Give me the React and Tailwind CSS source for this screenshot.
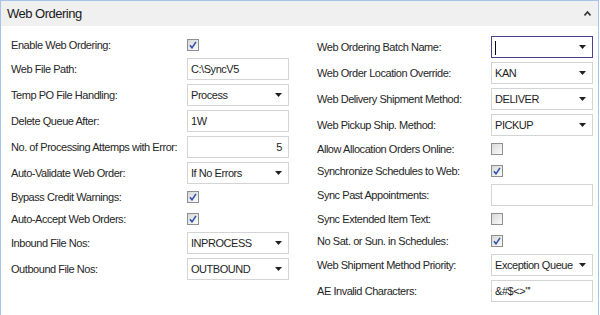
import React from 'react';

const font = { fontFamily: '"Liberation Sans", Arial, sans-serif' };

function Check({ checked }) {
	return (
		<div className="w-[12px] h-[12px] border border-[#8e8f8f] bg-gradient-to-br from-[#d8d8d8] to-[#fbfbfb] flex items-center justify-center">
			{checked && (
				<svg width="8" height="8" viewBox="0 0 8 8">
					<path d="M1 4.2 L3 6.8 L7 0.8" fill="none" stroke="#2a4fa8" strokeWidth="1.5" />
				</svg>
			)}
		</div>
	);
}

function Field({ value, dropdown, right, focused }) {
	return (
		<div
			className={`w-[102px] h-[22px] bg-white border flex items-center pl-[3px] pr-[6px] ${focused ? 'border-[#4d3f8f]' : 'border-[#d4d4d4]'}`}
		>
			<span className={`flex-1 text-[11px] tracking-[-0.45px] text-[#1e1e1e] whitespace-nowrap ${right ? 'text-right' : ''}`}>
				{focused ? <span className="inline-block w-px h-[14px] bg-black align-middle" /> : value}
			</span>
			{dropdown && (
				<svg width="7" height="4" viewBox="0 0 7 4" className="ml-1">
					<path d="M0 0 H7 L3.5 4 Z" fill="#222" />
				</svg>
			)}
		</div>
	);
}

function Row({ label, kind, value, right, focused, inputW }) {
	const isCheck = kind === 'check' || kind === 'empty';
	return (
		<div className={`flex items-center ${isCheck ? 'h-[22px]' : 'h-[26px]'}`}>
			<div className={`${inputW} text-[11px] tracking-[-0.45px] text-[#262626] whitespace-nowrap`}>{label}</div>
			{kind === 'check' && <Check checked />}
			{kind === 'empty' && <Check checked={false} />}
			{kind === 'text' && <Field value={value} right={right} focused={focused} />}
			{kind === 'drop' && <Field value={value} dropdown focused={focused} />}
		</div>
	);
}

const left = [
	{ label: 'Enable Web Ordering:', kind: 'check' },
	{ label: 'Web File Path:', kind: 'text', value: 'C:\\SyncV5' },
	{ label: 'Temp PO File Handling:', kind: 'drop', value: 'Process' },
	{ label: 'Delete Queue After:', kind: 'text', value: '1W' },
	{ label: 'No. of Processing Attemps with Error:', kind: 'text', value: '5', right: true },
	{ label: 'Auto-Validate Web Order:', kind: 'drop', value: 'If No Errors' },
	{ label: 'Bypass Credit Warnings:', kind: 'check' },
	{ label: 'Auto-Accept Web Orders:', kind: 'check' },
	{ label: 'Inbound File Nos:', kind: 'drop', value: 'INPROCESS' },
	{ label: 'Outbound File Nos:', kind: 'drop', value: 'OUTBOUND' },
];

const rightCol = [
	{ label: 'Web Ordering Batch Name:', kind: 'drop', focused: true },
	{ label: 'Web Order Location Override:', kind: 'drop', value: 'KAN' },
	{ label: 'Web Delivery Shipment Method:', kind: 'drop', value: 'DELIVER' },
	{ label: 'Web Pickup Ship. Method:', kind: 'drop', value: 'PICKUP' },
	{ label: 'Allow Allocation Orders Online:', kind: 'empty' },
	{ label: 'Synchronize Schedules to Web:', kind: 'check' },
	{ label: 'Sync Past Appointments:', kind: 'text', value: '' },
	{ label: 'Sync Extended Item Text:', kind: 'empty' },
	{ label: 'No Sat. or Sun. in Schedules:', kind: 'check' },
	{ label: 'Web Shipment Method Priority:', kind: 'drop', value: 'Exception Queue' },
	{ label: 'AE Invalid Characters:', kind: 'text', value: '&#$<>"\'' },
];

export default function App() {
	return (
		<div className="w-[600px] h-[315px] bg-white overflow-hidden" style={font}>
			<div className="w-[599px] h-[330px] border border-[#a6c4ea]">
				<div className="h-[25px] bg-[#f0f0f0] flex items-center justify-between pl-[6px] pr-[7px]">
					<span className="text-[13px] tracking-[-0.5px] text-[#1a1a1a]">Web Ordering</span>
					<svg width="7" height="5" viewBox="0 0 7 5">
						<path d="M0.5 4.5 L3.5 1 L6.5 4.5" fill="none" stroke="#333" strokeWidth="1.6" />
					</svg>
				</div>
				<div className="flex pl-[10px] pt-[8px]">
					<div className="w-[306px]">
						{left.map((r) => (
							<Row key={r.label} {...r} inputW="w-[176px]" />
						))}
					</div>
					<div>
						{rightCol.map((r) => (
							<Row key={r.label} {...r} inputW="w-[174px]" />
						))}
					</div>
				</div>
			</div>
		</div>
	);
}
